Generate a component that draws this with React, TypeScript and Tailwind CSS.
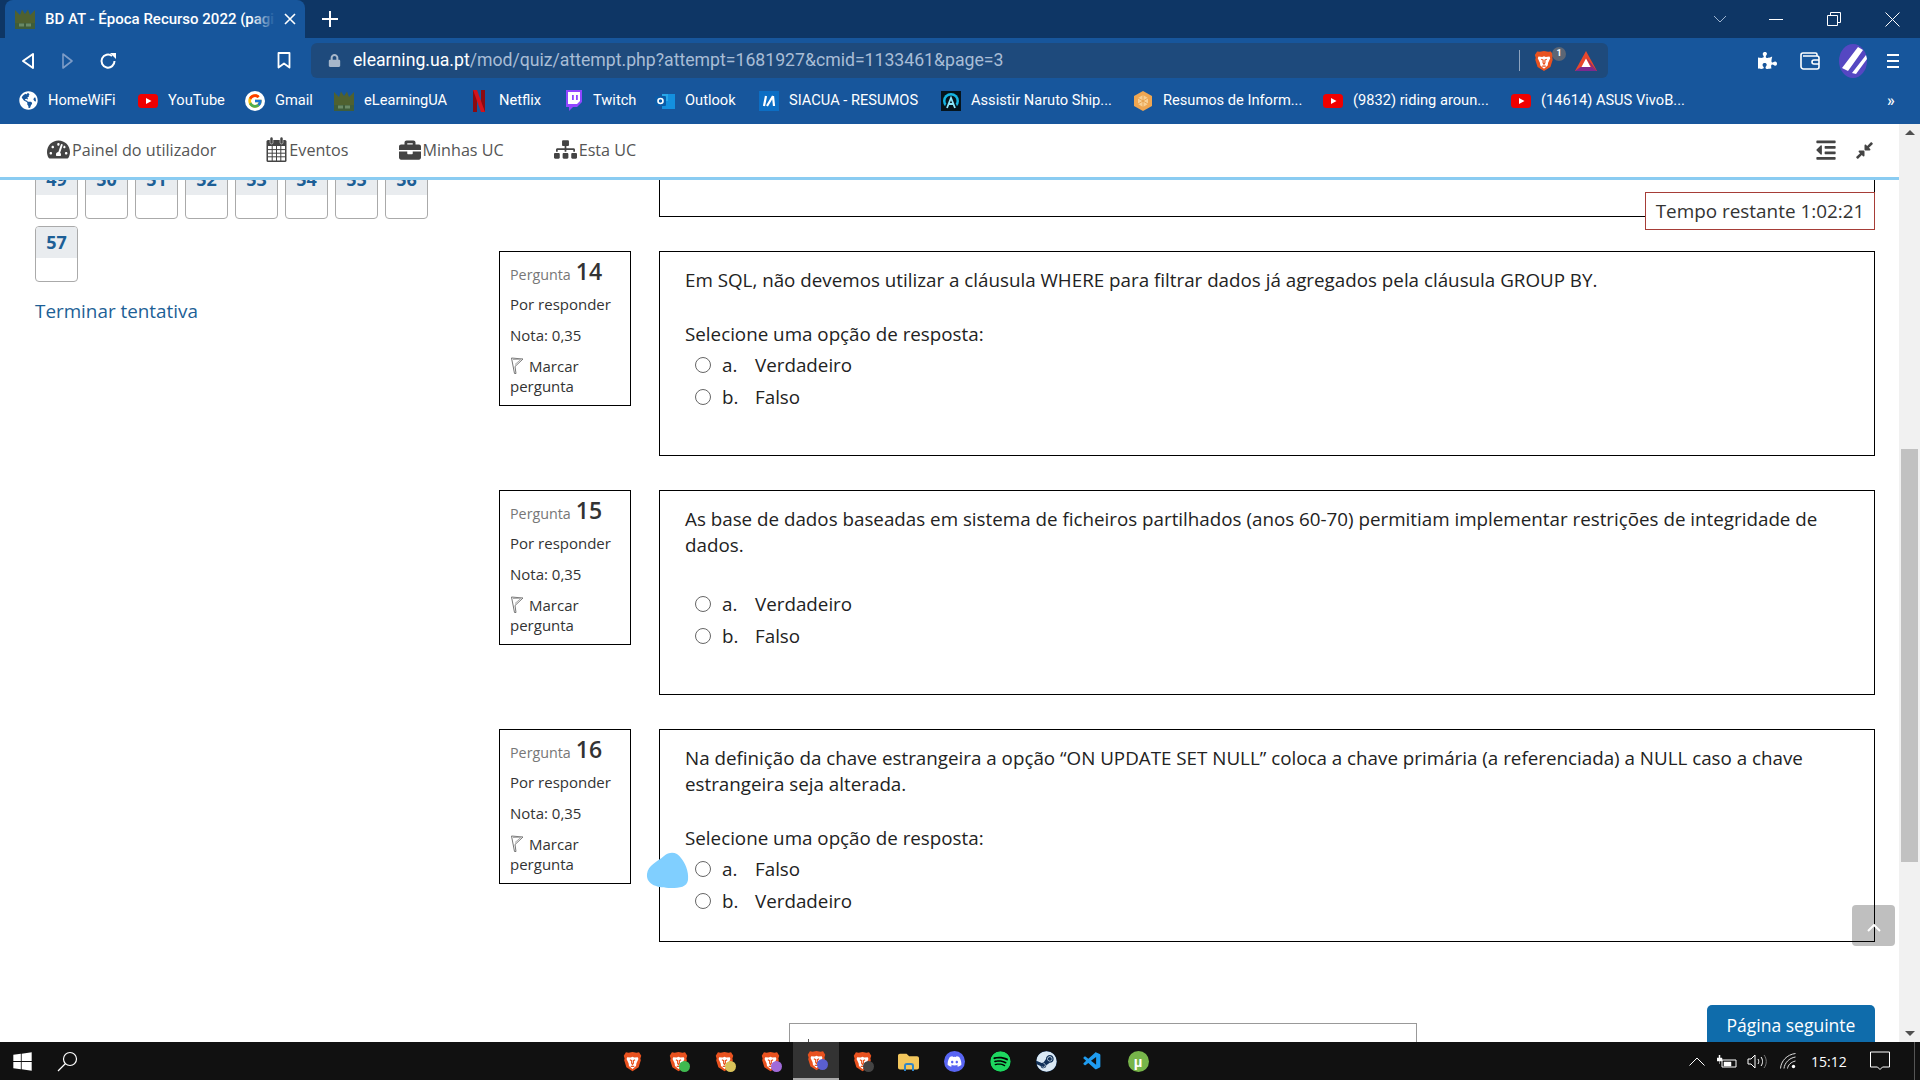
import {
  FaTachometerAlt,
  FaBriefcase,
  FaSitemap,
  FaOutdent,
  FaCompressAlt,
  FaPuzzlePiece,
  FaDiscord,
  FaSpotify,
  FaSteam,
  FaWindows,
  FaLock,
  FaGlobeAmericas,
  FaFolder,
} from "react-icons/fa";
import { FcGoogle } from "react-icons/fc";
import { VscVscode } from "react-icons/vsc";

function BraveIcon({ size = 20 }: { size?: number }) {
  return (
    <svg width={size} height={size} viewBox="0 0 24 24">
      <path d="M12 1l4.500 1 3-.5 2.500 4-1 3 .5 2-2.500 8-7 4.500-7-4.500-2.500-8 .5-2-1-3 2.500-4 3 .5z" fill="#e9521f" />
      <path d="M6 7l4 .5 2-.8 2 .8 4-.5 .8 2-2.300 5-.5 3-4 3.500-4-3.500-.5-3-2.300-5z" fill="#fff" />
      <path d="M9 10l2 1v3l1 1.500 1-1.500v-3l2-1M10 17.500h4" fill="none" stroke="#e9521f" strokeWidth="1.300" />
    </svg>
  );
}

function YoutubeIcon() {
  return (
    <svg width="20" height="20" viewBox="0 0 20 20">
      <rect x="0" y="3" width="20" height="14" rx="3.500" fill="#f00000" />
      <path d="M8 7l5.500 3-5.500 3z" fill="#fff" />
    </svg>
  );
}

function CrownIcon() {
  return (
    <svg width="20" height="20" viewBox="0 0 20 20">
      <path d="M0 1l5 5 2-5.500 3 4.500 3-4.500 2 5.500 5-5v13H0z" fill="#4f6130" />
      <path d="M0 14h20v6H0z" fill="#3f5d3a" />
      <path d="M4 14.500h5v3H4zM11 14.500h5v3h-5z" fill="#6a8a66" />
    </svg>
  );
}

function NetflixIcon() {
  return (
    <svg width="20" height="22" viewBox="0 0 20 22">
      <path d="M4 0h4v22l-4 0z" fill="#8c0a10" />
      <path d="M12 0h4v22h-4z" fill="#8c0a10" />
      <path d="M4 0h4l8 22h-4z" fill="#d3131c" />
    </svg>
  );
}

function TwitchIcon() {
  return (
    <svg width="18" height="21" viewBox="0 0 18 21">
      <path d="M2 0h16v12l-5 5h-4l-4 4v-4H2z" fill="#9146ff" />
      <path d="M4 2h12v9l-3 3H4z" fill="#fff" />
      <path d="M8 5h1.800v5H8zM12 5h1.800v5H12z" fill="#9146ff" />
    </svg>
  );
}

function OutlookIcon() {
  return (
    <svg width="20" height="20" viewBox="0 0 20 20">
      <rect x="7" y="3" width="13" height="15" fill="#1490df" />
      <rect x="7" y="3" width="6" height="7" fill="#28a8ea" />
      <rect x="0" y="5" width="11" height="10" rx="1" fill="#0a5ca8" />
      <circle cx="5.500" cy="10" r="2.500" fill="none" stroke="#fff" strokeWidth="1.600" />
    </svg>
  );
}

function SiacuaIcon() {
  return (
    <svg width="20" height="20" viewBox="0 0 20 20">
      <rect width="20" height="20" fill="#0c6ec4" />
      <path d="M5 15l2-10M14 5l-6 10M14 5l1 10" fill="none" stroke="#fff" strokeWidth="2.200" />
    </svg>
  );
}

function NarutoIcon() {
  return (
    <svg width="20" height="20" viewBox="0 0 20 20">
      <rect width="20" height="20" fill="#05141c" />
      <circle cx="10" cy="10" r="8" fill="#15b5e2" />
      <circle cx="10" cy="10" r="5.500" fill="#05141c" />
      <path d="M2 20l3-7h10l3 7z" fill="#05141c" />
      <path d="M6 17l4-10 4 10M8 13h4" fill="none" stroke="#8ee8fb" strokeWidth="1.800" />
    </svg>
  );
}

function HexIcon() {
  return (
    <svg width="20" height="20" viewBox="0 0 20 20">
      <path d="M10 0l9 5v10l-9 5-9-5V5z" fill="#efa651" />
      <path d="M10 4l5 3v6l-5 3-5-3V7z" fill="#f7cf94" />
      <path d="M10 4v12M5 7l10 6M15 7L5 13" stroke="#e59a43" strokeWidth=".8" />
    </svg>
  );
}

function BatIcon() {
  return (
    <svg width="24" height="24" viewBox="0 0 24 24">
      <path d="M12 2l11 20H1z" fill="#e8472b" />
      <path d="M1 22l5.500-4h11l5.500 4z" fill="#7c2a8f" />
      <path d="M17.500 18L12 8 23 22z" fill="#8e2a72" />
      <path d="M12 9.500l4.500 8.500h-9z" fill="#fff" />
    </svg>
  );
}

function Avatar() {
  return (
    <svg width="28" height="34" viewBox="0 0 28 34">
      <ellipse cx="14" cy="17" rx="14" ry="17" fill="#5547c2" />
      <path d="M3 24L19 3l5 3L9 27zM13 29L27 11l1 4-11 15z" fill="#fff" />
    </svg>
  );
}

function CalendarIcon() {
  return (
    <svg width="21" height="26" viewBox="0 0 21 26">
      <rect x=".5" y="3" width="20" height="22" rx="1.500" fill="#444" />
      <rect x="4" y="0" width="3" height="7" rx="1.500" fill="#444" stroke="#fff" strokeWidth=".5" />
      <rect x="14" y="0" width="3" height="7" rx="1.500" fill="#444" stroke="#fff" strokeWidth=".5" />
      <rect x="2" y="9" width="17" height="14.500" fill="#fff" />
      <path d="M6.200 9v15M10.500 9v15M14.800 9v15M2 12.600h17M2 16.200h17M2 19.800h17" stroke="#444" strokeWidth="1" />
    </svg>
  );
}

function FlagIcon() {
  return (
    <svg width="14" height="18" viewBox="0 0 14 18" className="shrink-0">
      <path d="M1.500 1l3 15.500h1.500L5 9.500 13 2z" fill="none" stroke="#777" strokeWidth="1" />
      <path d="M3 2.500L11 2.300 5 7.500" fill="none" stroke="#aaa" strokeWidth="1" />
    </svg>
  );
}

const bookmarks = [
  { label: "HomeWiFi", width: "w-[120px]", icon: <FaGlobeAmericas size={19} color="#fff" /> },
  { label: "YouTube", width: "w-[107px]", icon: <YoutubeIcon /> },
  {
    label: "Gmail",
    width: "w-[89px]",
    icon: (
      <span className="flex h-5 w-5 items-center justify-center rounded-full bg-white">
        <FcGoogle size={16} />
      </span>
    ),
  },
  { label: "eLearningUA", width: "w-[135px]", icon: <CrownIcon /> },
  { label: "Netflix", width: "w-[94px]", icon: <NetflixIcon /> },
  { label: "Twitch", width: "w-[92px]", icon: <TwitchIcon /> },
  { label: "Outlook", width: "w-[104px]", icon: <OutlookIcon /> },
  { label: "SIACUA - RESUMOS", width: "w-[182px]", icon: <SiacuaIcon /> },
  { label: "Assistir Naruto Ship...", width: "w-[192px]", icon: <NarutoIcon /> },
  { label: "Resumos de Inform...", width: "w-[190px]", icon: <HexIcon /> },
  { label: "(9832) riding aroun...", width: "w-[188px]", icon: <YoutubeIcon /> },
  { label: "(14614) ASUS VivoB...", width: "w-[190px]", icon: <YoutubeIcon /> },
];

function BrowserChrome() {
  return (
    <div className="h-[124px] shrink-0 bg-[#17569c] font-['Roboto',sans-serif] text-white">
      {/* Tabs */}
      <div className="flex h-[38px] items-center bg-[#0e3665]">
        <div className="ml-[5px] flex h-[38px] w-[300px] items-center rounded-t-lg bg-[#17569c] pl-[10px]">
          <CrownIcon />
          <div className="relative ml-[10px] w-[230px] overflow-hidden whitespace-nowrap text-[15px] font-medium">
            BD AT - Época Recurso 2022 (pagina 4 de
            <div className="absolute inset-y-0 right-0 w-6 bg-gradient-to-r from-transparent to-[#17569c]" />
          </div>
          <svg width="12" height="12" viewBox="0 0 12 12" className="ml-[9px]">
            <path d="M1 1l10 10M11 1L1 11" stroke="#fff" strokeWidth="1.600" />
          </svg>
        </div>
        <svg width="16" height="16" viewBox="0 0 16 16" className="ml-[17px]">
          <path d="M8 0v16M0 8h16" stroke="#fff" strokeWidth="2" />
        </svg>
        <div className="ml-auto flex items-center">
          <svg width="14" height="8" viewBox="0 0 14 8">
            <path d="M1 1l6 6 6-6" fill="none" stroke="#9db3cf" strokeWidth="1" />
          </svg>
          <div className="ml-[42px] h-px w-[14px] bg-white" />
          <svg width="14" height="14" viewBox="0 0 14 14" className="ml-[44px]">
            <path d="M.5 3.500h10v10H.5zM3.500 3.500v-3h10v10h-3" fill="none" stroke="#fff" strokeWidth="1" />
          </svg>
          <svg width="15" height="15" viewBox="0 0 15 15" className="ml-[44px] mr-[20px]">
            <path d="M.5.5l14 14M14.500.5l-14 14" stroke="#fff" strokeWidth="1" />
          </svg>
        </div>
      </div>

      {/* Toolbar */}
      <div className="flex h-[42px] items-start pt-[5px]">
        <div className="flex h-[35px] items-center">
          <svg width="14" height="18" viewBox="0 0 14 18" className="ml-[21px]">
            <path d="M12 2L2 9l10 7z" fill="none" stroke="#fff" strokeWidth="2" strokeLinejoin="round" />
          </svg>
          <svg width="13" height="18" viewBox="0 0 13 18" className="ml-[26px]">
            <path d="M2 2l9 7-9 7z" fill="none" stroke="#7d9cc7" strokeWidth="1.600" strokeLinejoin="round" />
          </svg>
          <svg width="18" height="18" viewBox="0 0 18 18" className="ml-[25px]">
            <path d="M15.500 9A6.500 6.500 0 1 1 13 4" fill="none" stroke="#fff" strokeWidth="2" />
            <path d="M11 1h6v6z" fill="#fff" />
          </svg>
          <svg width="14" height="17" viewBox="0 0 14 17" className="ml-[160px]">
            <path d="M1.500 1h11v14.500L7 11.500l-5.500 4z" fill="none" stroke="#fff" strokeWidth="1.800" strokeLinejoin="round" />
          </svg>
        </div>
        <div className="ml-[20px] flex h-[35px] w-[1297px] items-center rounded-md bg-[#1e4a7c] pl-[17px]">
          <FaLock size={13} color="#a7b7ca" />
          <div className="ml-[12px] w-[1166px] whitespace-nowrap text-[17.660px]">
            elearning.ua.pt
            <span className="text-[#a9bdd6]">/mod/quiz/attempt.php?attempt=1681927&amp;cmid=1133461&amp;page=3</span>
          </div>
          <div className="h-[21px] w-px bg-[#8ea4bf]" />
          <div className="relative ml-[13px]">
            <BraveIcon size={22} />
            <div className="absolute -right-[11px] -top-[3px] flex h-[14px] w-[14px] items-center justify-center rounded-full bg-[#5c6675] text-[9px] font-bold">
              1
            </div>
          </div>
          <div className="ml-[19px]">
            <BatIcon />
          </div>
        </div>
        <div className="flex h-[35px] items-center">
          <FaPuzzlePiece size={19} color="#fff" className="ml-[150px]" />
          <svg width="20" height="18" viewBox="0 0 20 18" className="ml-[23px]">
            <path d="M17 4V2.500A1.500 1.500 0 0 0 15.500 1H3a2 2 0 0 0-2 2v11.500A2.500 2.500 0 0 0 3.500 17H17a2 2 0 0 0 2-2V6a2 2 0 0 0-2-2H3" fill="none" stroke="#fff" strokeWidth="1.600" />
            <path d="M19 8h-5a2 2 0 0 0 0 4h5" fill="none" stroke="#fff" strokeWidth="1.600" />
          </svg>
          <div className="ml-[19px]">
            <Avatar />
          </div>
          <div className="ml-[20px] flex w-[12px] flex-col gap-[4px]">
            <div className="h-[2px] bg-white" />
            <div className="h-[2px] bg-white" />
            <div className="h-[2px] bg-white" />
          </div>
        </div>
      </div>

      {/* Bookmarks */}
      <div className="flex h-[42px] items-center pl-[18px] text-[14.650px]">
        {bookmarks.map((b) => (
          <div key={b.label + b.width} className={`flex items-center gap-[10px] whitespace-nowrap ${b.width}`}>
            <span className="flex w-5 shrink-0 justify-center">{b.icon}</span>
            {b.label}
          </div>
        ))}
        <div className="ml-[186px] text-[16px] font-medium leading-none">»</div>
      </div>
    </div>
  );
}

const navItems = [
  { label: "Painel do utilizador", icon: <FaTachometerAlt size={23} color="#444" /> },
  { label: "Eventos", icon: <CalendarIcon /> },
  { label: "Minhas UC", icon: <FaBriefcase size={22} color="#444" /> },
  { label: "Esta UC", icon: <FaSitemap size={23} color="#444" /> },
];

function TopNav() {
  return (
    <div className="flex h-[56px] shrink-0 items-center border-b-[3px] border-[#8accf2] bg-white pb-[1px] pl-[47px] pr-[25px] text-[16.150px] text-[#555]">
      <div className="flex items-center gap-[50px]">
        {navItems.map((item) => (
          <div key={item.label} className="flex items-center gap-[2px]">
            {item.icon}
            {item.label}
          </div>
        ))}
      </div>
      <div className="ml-auto flex items-center gap-[18px]">
        <FaOutdent size={22} color="#444" />
        <FaCompressAlt size={19} color="#444" />
      </div>
    </div>
  );
}

const navNumbers = ["49", "50", "51", "52", "53", "54", "55", "56"];

function QuizCell({ n }: { n: string }) {
  return (
    <div className="h-[56px] w-[43px] overflow-hidden rounded border border-[#aaa] bg-white">
      <div className="h-[31px] bg-[#e9ecef] text-center text-[18px] font-bold leading-[30px] text-[#1d5f96]">{n}</div>
    </div>
  );
}

function Sidebar() {
  return (
    <div className="-mt-[17px] w-[499px] shrink-0 pl-[35px]">
      <div className="flex gap-[7px]">
        {navNumbers.map((n) => (
          <QuizCell key={n} n={n} />
        ))}
      </div>
      <div className="mt-[7px]">
        <QuizCell n="57" />
      </div>
      <div className="mt-[15px] text-[18.850px] leading-[28px] text-[#1d5f96]">Terminar tentativa</div>
    </div>
  );
}

function InfoBox({ n }: { n: number }) {
  return (
    <div className="h-[155px] w-[132px] shrink-0 border border-black px-[10px] pt-[3px] text-[15px] leading-[20px] text-[#333]">
      <div className="flex h-[32px] items-baseline gap-[5px] text-[#777]">
        <span className="text-[14.300px]">Pergunta</span>
        <span className="text-[23px] font-semibold leading-[32px] text-[#333]">{n}</span>
      </div>
      <div className="mt-[7px]">Por responder</div>
      <div className="mt-[11px]">Nota: 0,35</div>
      <div className="mt-[11px] flex items-center gap-[5px]">
        <FlagIcon />
        Marcar
      </div>
      <div>pergunta</div>
    </div>
  );
}

function Options({ first, second }: { first: string; second: string }) {
  return (
    <div className="pl-[10px]">
      {[
        ["a.", first],
        ["b.", second],
      ].map(([letter, text]) => (
        <div key={letter} className="flex h-[32px] items-center">
          <div className="h-4 w-4 rounded-full border border-[#666] bg-white" />
          <span className="ml-[11px] w-[33px]">{letter}</span>
          {text}
        </div>
      ))}
    </div>
  );
}

function Question({ n, children }: { n: number; children: React.ReactNode }) {
  return (
    <div className="flex gap-[28px]">
      <InfoBox n={n} />
      <div className="min-h-[205px] flex-1 border border-black px-[25px] pb-[24px] pt-[15px] text-[18.800px] leading-[26px] text-[#222]">
        {children}
      </div>
    </div>
  );
}

function Main() {
  return (
    <div className="min-w-0 flex-1 pr-[24px]">
      <div className="ml-[160px] h-[37px] border-x border-b border-black" />
      <div className="mt-[34px] flex flex-col gap-[34px]">
        <Question n={14}>
          <p>Em SQL, não devemos utilizar a cláusula WHERE para filtrar dados já agregados pela cláusula GROUP BY.</p>
          <p className="mt-[28px]">Selecione uma opção de resposta:</p>
          <div className="mt-[2px]">
            <Options first="Verdadeiro" second="Falso" />
          </div>
        </Question>
        <Question n={15}>
          <p>
            As base de dados baseadas em sistema de ficheiros partilhados (anos 60-70) permitiam implementar restrições de integridade de dados.
          </p>
          <div className="mt-[30px]">
            <Options first="Verdadeiro" second="Falso" />
          </div>
        </Question>
        <Question n={16}>
          <p>
            Na definição da chave estrangeira a opção “ON UPDATE SET NULL” coloca a chave primária (a referenciada) a NULL caso a chave estrangeira seja alterada.
          </p>
          <p className="mt-[28px]">Selecione uma opção de resposta:</p>
          <div className="mt-[2px]">
            <Options first="Falso" second="Verdadeiro" />
          </div>
        </Question>
      </div>
      <div className="mt-[63px] flex items-start">
        <div className="relative ml-[290px] mt-[18px] h-[40px] w-[628px] border border-[#999]">
          <div className="absolute left-[18px] top-[15px] h-[12px] w-px bg-[#555]" />
        </div>
        <div className="ml-auto h-[50px] w-[168px] rounded-t-[5px] bg-[#0f6cab] pt-[7px] text-center text-[17.500px] leading-[26px] text-white">
          Página seguinte
        </div>
      </div>
    </div>
  );
}

function Scrollbar() {
  return (
    <div className="relative w-[21px] shrink-0 bg-[#f1f1f1]">
      <div className="flex h-[17px] items-center justify-center">
        <div className="h-0 w-0 border-x-[5px] border-b-[5px] border-x-transparent border-b-[#505050]" />
      </div>
      <div className="mx-[2px] mt-[308px] h-[413px] bg-[#c1c1c1]" />
      <div className="absolute bottom-0 flex h-[17px] w-full items-center justify-center">
        <div className="h-0 w-0 border-x-[5px] border-t-[5px] border-x-transparent border-t-[#505050]" />
      </div>
    </div>
  );
}

const taskIcons = [
  { key: "b1", badge: null },
  { key: "b2", badge: "bg-[#3fb950]" },
  { key: "b3", badge: "bg-[#d9c25a]" },
  { key: "b4", badge: "bg-[#a06ad8]" },
  { key: "b5", badge: "bg-[#5a5fd0]", active: true },
  { key: "b6", badge: "bg-[#444]" },
];

function Taskbar() {
  return (
    <div className="flex h-[38px] shrink-0 items-center bg-[#111111] text-white">
      <FaWindows size={21} className="ml-[12px]" />
      <svg width="21" height="21" viewBox="0 0 21 21" className="ml-[24px]">
        <circle cx="13" cy="8" r="6.500" fill="none" stroke="#fff" strokeWidth="1.200" />
        <path d="M8.500 12.500L1 20" stroke="#fff" strokeWidth="1.200" />
      </svg>
      <div className="ml-[531px] flex">
        {taskIcons.map((t) => (
          <div
            key={t.key}
            className={
              t.active
                ? "relative flex h-[38px] w-[46px] items-center justify-center border-b-2 border-[#aaa] bg-[#333]"
                : "relative flex h-[38px] w-[46px] items-center justify-center"
            }
          >
            <BraveIcon size={21} />
            {t.badge && <div className={`absolute bottom-[8px] right-[11px] h-[11px] w-[11px] rounded-full ${t.badge}`} />}
          </div>
        ))}
        <div className="flex h-[38px] w-[46px] items-center justify-center">
          <div className="relative">
            <FaFolder size={21} color="#f2c65c" />
            <div className="absolute bottom-[1px] left-[6px] h-[8px] w-[10px] rounded-t-[3px] border-2 border-b-0 border-[#2f86c9]" />
          </div>
        </div>
        <div className="flex h-[38px] w-[46px] items-center justify-center">
          <div className="flex h-[21px] w-[21px] items-center justify-center rounded-full bg-[#5865f2]">
            <FaDiscord size={15} color="#fff" />
          </div>
        </div>
        <div className="flex h-[38px] w-[46px] items-center justify-center">
          <FaSpotify size={21} color="#1ed760" className="rounded-full bg-black" />
        </div>
        <div className="flex h-[38px] w-[46px] items-center justify-center">
          <FaSteam size={21} color="#dbe9f4" className="rounded-full bg-[#12325a]" />
        </div>
        <div className="flex h-[38px] w-[46px] items-center justify-center">
          <VscVscode size={21} color="#1f9cf0" />
        </div>
        <div className="flex h-[38px] w-[46px] items-center justify-center">
          <div className="flex h-[21px] w-[21px] items-center justify-center rounded-full bg-[#77b54a] font-['Liberation_Sans',sans-serif] text-[15px] font-bold leading-none text-white">
            µ
          </div>
        </div>
      </div>
      <div className="ml-[528px] flex items-center">
        <svg width="16" height="9" viewBox="0 0 16 9">
          <path d="M.5 8.500L8 1l7.500 7.500" fill="none" stroke="#fff" strokeWidth="1" />
        </svg>
        <svg width="20" height="13" viewBox="0 0 20 13" className="ml-[12px]">
          <path d="M5 5h14v7H5z" fill="none" stroke="#fff" strokeWidth="1" />
          <path d="M7 7h7v4H7zM0 3h5v3H0zM2 0h1v3H2zM2.500 6v3" fill="#fff" stroke="#fff" strokeWidth=".5" />
        </svg>
        <svg width="20" height="15" viewBox="0 0 20 15" className="ml-[10px]">
          <path d="M1 5h3l4-4v13l-4-4H1zM11 5c1 1.500 1 3.500 0 5M14 3c2 2.500 2 6.500 0 9" fill="none" stroke="#fff" strokeWidth="1" />
          <path d="M17 1c3 4 3 9 0 13" fill="none" stroke="#777" strokeWidth="1" />
        </svg>
        <svg width="16" height="16" viewBox="0 0 16 16" className="ml-[13px]">
          <path d="M.5 15.500C1 8 7 1.500 15.500.5M4 15.500C4.500 10 9 5 15.500 4M7.500 15.500C8 12 11 9 15.500 8" fill="none" stroke="#ddd" strokeWidth="1" />
          <circle cx="13.500" cy="13.500" r="1.700" fill="#fff" />
        </svg>
        <div className="ml-[15px] font-['Open_Sans',sans-serif] text-[14px]">15:12</div>
        <svg width="20" height="20" viewBox="0 0 20 20" className="ml-[23px]">
          <path d="M.5 1h19v15h-7l-2.500 2.500L7.500 16h-7z" fill="none" stroke="#fff" strokeWidth="1" />
        </svg>
      </div>
      <div className="ml-auto mr-[5px] h-[38px] w-px bg-[#555]" />
    </div>
  );
}

export default function App() {
  return (
    <div className="flex h-screen w-full flex-col overflow-hidden bg-white font-['Open_Sans',sans-serif]">
      <BrowserChrome />
      <div className="flex min-h-0 flex-1">
        <div className="relative flex min-w-0 flex-1 flex-col">
          <TopNav />
          <div className="flex min-h-0 flex-1 overflow-hidden">
            <Sidebar />
            <Main />
          </div>

          {/* Timer block */}
          <div className="absolute left-[1645px] top-[68px] flex h-[38px] w-[230px] items-center justify-center border border-[#a63d37] bg-white text-[18.900px] text-[#333]">
            Tempo restante 1:02:21
          </div>

          {/* Back to top */}
          <div className="absolute left-[1852px] top-[781px] flex h-[41px] w-[43px] items-center justify-center rounded bg-black/25 pt-1">
            <svg width="14" height="8" viewBox="0 0 14 8">
              <path d="M1 7l6-6 6 6" fill="none" stroke="#fff" strokeWidth="2" />
            </svg>
          </div>

          {/* Pen blot over question 16 */}
          <svg width="43" height="38" viewBox="0 0 43 38" className="absolute left-[646px] top-[727px]">
            <path d="M1 23C2 14 11 11 18 5c6-5 13-4 17 2 4 5 8 13 7 22-1 7-8 8-17 8C12 37 0 34 1 23z" fill="#80cfff" />
          </svg>
        </div>
        <Scrollbar />
      </div>
      <Taskbar />
    </div>
  );
}
